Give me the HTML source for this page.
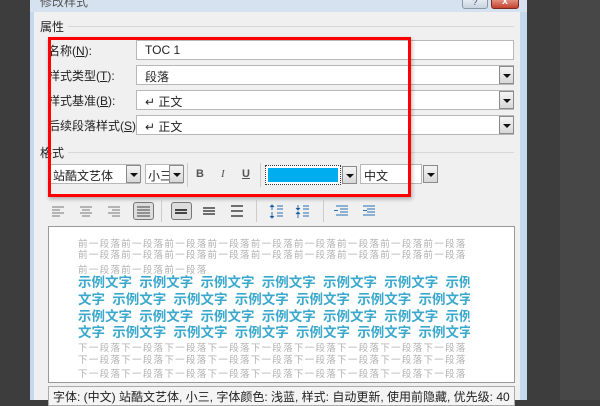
<!DOCTYPE html>
<html><head><meta charset="utf-8"><style>
*{margin:0;padding:0;box-sizing:border-box}
body{width:600px;height:400px;overflow:hidden;background:#3d3d3d;font-family:"Liberation Sans","Noto Sans CJK SC",sans-serif;font-size:12px;color:#222;position:relative}
.a{position:absolute}
.inp{position:absolute;background:#fff;border:1px solid #b8b8b8;height:20px;padding:2px 8px;font-size:12px}
.dd{position:absolute;width:15px;height:18px;background:linear-gradient(#f4f4f4,#d8d8d8);border:1px solid #8a8a8a;}
.dd:after{content:"";position:absolute;left:3px;top:7px;border-left:4px solid transparent;border-right:4px solid transparent;border-top:4px solid #111}
.lbl{position:absolute;font-size:12px;color:#222}
.g{position:absolute;left:78px;font-size:9.6px;letter-spacing:1.2px;color:#b0b0b0;white-space:nowrap;overflow:hidden;width:392px}
.b{position:absolute;left:78px;font-size:13.5px;font-weight:bold;color:#3aa8cc;white-space:nowrap;overflow:hidden;width:392px;word-spacing:3.5px}
</style></head><body>
<div class="a" style="left:560px;top:0;width:40px;height:400px;background:#474747"></div>
<div class="a" style="left:30px;top:0;width:497px;height:400px;background:#c5d9ee"></div>
<div class="a" style="left:34px;top:0;width:486px;height:400px;background:#f0f0f0"></div>
<div class="a" style="left:30px;top:0;width:497px;height:12px;background:#d6e2f0"></div>
<div class="lbl" style="left:40px;top:-7px;color:#555">修改样式</div>
<div class="a" style="left:462px;top:-2px;width:26px;height:11px;background:linear-gradient(#e8eef5,#c8d3df);border:1px solid #8a99aa;border-radius:0 0 3px 3px;font-size:9px;text-align:center;line-height:6px;color:#445">?</div>
<div class="a" style="left:491px;top:-2px;width:28px;height:11px;background:linear-gradient(#e59a8a,#c3412c);border:1px solid #7a2a20;border-radius:0 0 3px 3px;color:#fff;font-size:10px;font-weight:bold;text-align:center;line-height:6px">x</div>
<div class="lbl" style="left:40px;top:18px">属性</div>
<div class="a" style="left:68px;top:26px;width:446px;height:1px;background:#d8d8d8"></div>
<div class="lbl" style="left:48px;top:42px">名称(<u>N</u>):</div>
<div class="inp" style="left:136px;top:40px;width:378px">TOC 1</div>
<div class="lbl" style="left:48px;top:67px">样式类型(<u>T</u>):</div>
<div class="inp" style="left:136px;top:65px;width:378px">段落</div><div class="dd" style="left:499px;top:66px"></div>
<div class="lbl" style="left:48px;top:92px">样式基准(<u>B</u>):</div>
<div class="inp" style="left:136px;top:90px;width:378px">↵ 正文</div><div class="dd" style="left:499px;top:91px"></div>
<div class="lbl" style="left:48px;top:117px">后续段落样式(<u>S</u>):</div>
<div class="inp" style="left:136px;top:115px;width:378px">↵ 正文</div><div class="dd" style="left:499px;top:116px"></div>
<div class="lbl" style="left:40px;top:144px">格式</div>
<div class="a" style="left:68px;top:152px;width:446px;height:1px;background:#d8d8d8"></div>
<div class="inp" style="left:50px;top:164px;width:90px;padding:2px 2px">站酷文艺体</div><div class="dd" style="left:126px;top:165px"></div>
<div class="inp" style="left:145px;top:164px;width:38px;padding:2px 2px">小三</div><div class="dd" style="left:169px;top:165px"></div>
<div class="a" style="left:187px;top:163px;width:1px;height:24px;background:#ccc"></div>
<div class="lbl" style="left:196px;top:168px;font-weight:bold;font-size:11px;color:#555">B</div>
<div class="lbl" style="left:221px;top:168px;font-style:italic;font-size:11px;color:#555;font-family:'Liberation Serif',serif">I</div>
<div class="lbl" style="left:242px;top:168px;text-decoration:underline;font-size:11px;color:#555;font-weight:bold">U</div>
<div class="a" style="left:260px;top:163px;width:1px;height:24px;background:#ccc"></div>
<div class="a" style="left:265px;top:165px;width:76px;height:20px;border:1px dotted #333;background:#fff;padding:2px"><div style="background:#00aeef;width:100%;height:100%"></div></div>
<div class="dd" style="left:342px;top:166px"></div>
<div class="inp" style="left:360px;top:164px;width:62px;padding:2px 3px">中文</div><div class="dd" style="left:423px;top:165px"></div>
<div class="a" style="left:48px;top:37px;width:363px;height:160px;border:3px solid #f00;box-shadow:1px 2px 4px rgba(0,0,0,.3)"></div>
<div class="a" style="left:133px;top:202px;width:21px;height:18px;border:1px solid #777;border-radius:3px;background:#ddd"></div>
<div class="a" style="left:171px;top:202px;width:21px;height:18px;border:1px solid #777;border-radius:3px;background:#ddd"></div>
<div class="a" style="left:161px;top:200px;width:1px;height:22px;background:#ccc"></div>
<div class="a" style="left:256px;top:200px;width:1px;height:22px;background:#ccc"></div>
<div class="a" style="left:323px;top:200px;width:1px;height:22px;background:#ccc"></div>
<svg class="a" style="left:0;top:200px" width="400" height="24" stroke="#777" stroke-width="1">
<path d="M52 7h12M52 10h8M52 13h12M52 16h8"/>
<path d="M80 7h12M82 10h8M80 13h12M82 16h8"/>
<path d="M108 7h12M112 10h8M108 13h12M112 16h8"/>
<path d="M137 7h13M137 10h13M137 13h13M137 16h13" stroke="#444"/>
<path d="M175 10h12M175 13h12" stroke="#111" stroke-width="1.5"/>
<path d="M203 8h12M203 11h12M203 14h12" stroke="#222" stroke-width="1.3"/>
<path d="M231 6h12M231 11h12M231 16h12" stroke="#222" stroke-width="1.3"/>
<path d="M272 5v5M270 7l2-2 2 2M272 12v6M270 16l2 2 2-2M277 6h6M277 9h6M277 13h6M277 16h6" stroke="#2a6fb3"/>
<path d="M298 5v5M296 8l2 2 2-2M298 12v6M296 14l2-2 2 2M303 6h6M303 9h6M303 13h6M303 16h6" stroke="#2a6fb3"/>
<path d="M336 6h12M340 9h8M340 12h8M336 15h12M334 10.5h4" stroke="#2a6fb3"/>
<path d="M363 6h12M367 9h8M367 12h8M363 15h12M363 10.5h4" stroke="#2a6fb3"/>
</svg>
<div class="a" style="left:48px;top:226px;width:467px;height:157px;background:#fff;border:1px solid #999"></div>
<div class="g" style="top:236px">前一段落前一段落前一段落前一段落前一段落前一段落前一段落前一段落前一段落</div>
<div class="g" style="top:247px">前一段落前一段落前一段落前一段落前一段落前一段落前一段落前一段落前一段落</div>
<div class="g" style="top:262px">前一段落前一段落前一段落</div>
<div class="b" style="top:271px">示例文字 示例文字 示例文字 示例文字 示例文字 示例文字 示例</div>
<div class="b" style="top:288px">文字 示例文字 示例文字 示例文字 示例文字 示例文字 示例文字</div>
<div class="b" style="top:305px">示例文字 示例文字 示例文字 示例文字 示例文字 示例文字 示例</div>
<div class="b" style="top:321px">文字 示例文字 示例文字 示例文字 示例文字 示例文字 示例文字</div>
<div class="g" style="top:340px">下一段落下一段落下一段落下一段落下一段落下一段落下一段落下一段落下一段落</div>
<div class="g" style="top:352px">下一段落下一段落下一段落下一段落下一段落下一段落下一段落下一段落下一段落</div>
<div class="g" style="top:366px">下一段落下一段落下一段落下一段落下一段落下一段落下一段落下一段落下一段落</div>
<div class="a" style="left:48px;top:386px;width:467px;height:20px;background:#f4f4f4;border:1px solid #aaa;padding:1px 4px;font-size:12px;white-space:nowrap;overflow:hidden">字体: (中文) 站酷文艺体, 小三, 字体颜色: 浅蓝, 样式: 自动更新, 使用前隐藏, 优先级: 40</div>
</body></html>
